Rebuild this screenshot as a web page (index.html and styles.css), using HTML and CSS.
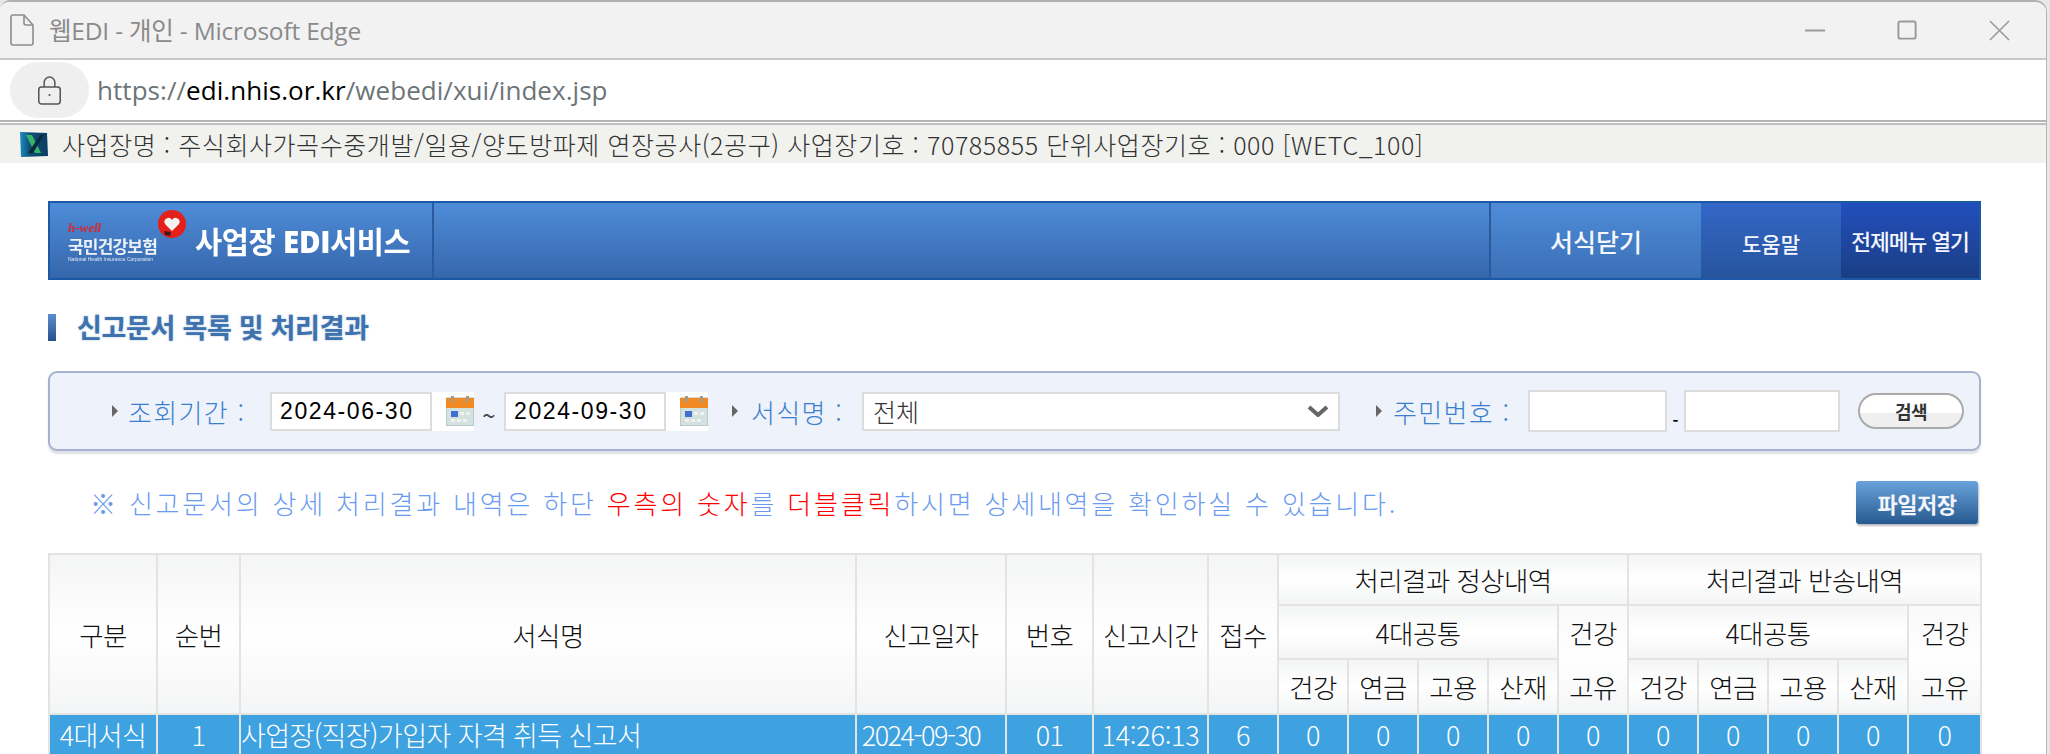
FILE: index.html
```html
<!DOCTYPE html>
<html lang="ko">
<head>
  <meta charset="UTF-8">
  <title>웹EDI - 개인 - Microsoft Edge</title>
  <link rel="stylesheet" href="styles.css">
</head>
<body>
  <div class="window">
    <!-- 타이틀바 -->
    <div class="titlebar">
      <svg class="page-icon" viewBox="0 0 24 32" fill="none" stroke="#8c8c8c" stroke-width="1.6">
        <path d="M3 1h11l9 10v18a2 2 0 0 1-2 2H3a2 2 0 0 1-2-2V3a2 2 0 0 1 2-2z"/>
        <path d="M14 1v8a2 2 0 0 0 2 2h7"/>
      </svg>
      <span class="win-title">웹EDI - 개인 - Microsoft Edge</span>
      <div class="win-buttons">
        <svg viewBox="0 0 22 22" stroke="#999" stroke-width="2" fill="none"><path d="M0 11h21"/></svg>
        <svg viewBox="0 0 22 22" stroke="#999" stroke-width="2" fill="none"><rect x="1.5" y="1.5" width="18" height="18" rx="2"/></svg>
        <svg viewBox="0 0 22 22" stroke="#999" stroke-width="1.6" fill="none"><path d="M1 1l20 20M21 1L1 21"/></svg>
      </div>
    </div>

    <!-- 주소창 -->
    <div class="addressbar">
      <div class="lock">
        <svg viewBox="0 0 28 32" fill="none" stroke="#555" stroke-width="1.7">
          <rect x="2" y="12" width="24" height="19" rx="3"/>
          <path d="M8 12V7a6 6 0 0 1 12 0v5"/>
          <circle cx="14" cy="21" r="1.2" fill="#555" stroke="none"/>
        </svg>
      </div>
      <div class="url">https://<b>edi.nhis.or.kr</b>/webedi/xui/index.jsp</div>
    </div>

    <!-- 사업장 정보 -->
    <div class="infobar">
      <svg class="app-icon" viewBox="0 0 30 28">
        <defs>
          <linearGradient id="appBg" x1="0" y1="0" x2="1" y2="0">
            <stop offset="0" stop-color="#1b8fc4"/>
            <stop offset="0.35" stop-color="#0f4e73"/>
            <stop offset="1" stop-color="#0c3d63"/>
          </linearGradient>
        </defs>
        <path d="M1 2l27 1 1 23-27 1z" fill="url(#appBg)"/>
        <path d="M7 5h6l9 18h-6z" fill="#35b56b"/>
        <path d="M21 5h4L14 23H9z" fill="#0a2a44"/>
      </svg>
      <span>사업장명 : 주식회사가곡수중개발/일용/양도방파제 연장공사(2공구) 사업장기호 : 70785855 단위사업장기호 : 000 [WETC_100]</span>
    </div>

    <div class="content">
      <!-- 상단 배너 -->
      <div class="banner">
        <div class="banner-logo">
          <div class="logo-mark">
            <span class="logo-hwell">h-well</span>
            <span class="logo-name">국민건강보험</span>
            <span class="logo-sub">National Health Insurance Corporation</span>
            <svg class="logo-heart" viewBox="0 0 30 30">
              <circle cx="15" cy="14" r="14" fill="#e5201b"/>
              <path d="M15 21l-7-7a4 4 0 0 1 7-4 4 4 0 0 1 7 4z" fill="#f7f2f2"/>
              <path d="M7 21l7 1-1 4-5-1z" fill="#3a1a1a"/>
            </svg>
          </div>
          <span class="logo-title">사업장 <b>EDI</b>서비스</span>
        </div>
        <div class="banner-space"></div>
        <div class="banner-close">서식닫기</div>
        <div class="banner-help">도움말</div>
        <div class="banner-menu">전제메뉴 열기</div>
      </div>

      <h2 class="section-title">신고문서 목록 및 처리결과</h2>

      <!-- 조회 조건 -->
      <div class="search">
        <span class="s-arrow"></span>
        <label class="s-label s-period">조회기간 :</label>
        <input class="s-date" type="text" value="2024-06-30">
        <span class="s-cal">
          <svg viewBox="0 0 28 30">
            <rect x="0" y="2" width="28" height="28" rx="1" fill="#d3e2de" stroke="#9fb3b3"/>
            <rect x="0" y="2" width="28" height="10" fill="#f08a24"/>
            <rect x="5" y="0" width="3" height="6" fill="#a99a7c"/>
            <rect x="20" y="0" width="3" height="6" fill="#a99a7c"/>
            <rect x="5" y="15" width="7" height="6" fill="#3f6fd0"/>
            <path d="M14 16h4v3h-4zM20 16h4v3h-4zM5 23h4v3H5zM11 23h4v3h-4zM17 23h4v3h-4z" fill="#eef3f1"/>
          </svg>
        </span>
        <span class="s-tilde">~</span>
        <input class="s-date" type="text" value="2024-09-30">
        <span class="s-cal">
          <svg viewBox="0 0 28 30">
            <rect x="0" y="2" width="28" height="28" rx="1" fill="#d3e2de" stroke="#9fb3b3"/>
            <rect x="0" y="2" width="28" height="10" fill="#f08a24"/>
            <rect x="5" y="0" width="3" height="6" fill="#a99a7c"/>
            <rect x="20" y="0" width="3" height="6" fill="#a99a7c"/>
            <rect x="5" y="15" width="7" height="6" fill="#3f6fd0"/>
            <path d="M14 16h4v3h-4zM20 16h4v3h-4zM5 23h4v3H5zM11 23h4v3h-4zM17 23h4v3h-4z" fill="#eef3f1"/>
          </svg>
        </span>
        <span class="s-arrow s-arrow-form"></span>
        <label class="s-label s-form">서식명 :</label>
        <div class="s-select">
          <span>전체</span>
          <svg viewBox="0 0 22 12" fill="none" stroke="#666" stroke-width="4"><path d="M2 2l9 8 9-8"/></svg>
        </div>
        <span class="s-arrow s-arrow-id"></span>
        <label class="s-label s-id">주민번호 :</label>
        <input class="s-id1" type="text">
        <span class="s-dash">-</span>
        <input class="s-id2" type="text">
        <button class="s-btn" type="button">검색</button>
      </div>

      <div class="notice-row">
        <p class="notice">※ 신고문서의 상세 처리결과 내역은 하단 <em>우측의 숫자</em>를 <em>더블클릭</em>하시면 상세내역을 확인하실 수 있습니다.</p>
        <button class="save-btn" type="button">파일저장</button>
      </div>

      <table class="result">
        <colgroup>
          <col class="c-type"><col class="c-seq"><col class="c-name"><col class="c-date"><col class="c-no"><col class="c-time"><col class="c-n">
          <col class="c-n"><col class="c-n"><col class="c-n"><col class="c-n"><col class="c-n">
          <col class="c-n"><col class="c-n"><col class="c-n"><col class="c-n"><col class="c-last">
        </colgroup>
        <thead>
          <tr class="r1">
            <th rowspan="3">구분</th>
            <th rowspan="3">순번</th>
            <th rowspan="3">서식명</th>
            <th rowspan="3">신고일자</th>
            <th rowspan="3">번호</th>
            <th rowspan="3">신고시간</th>
            <th rowspan="3">접수</th>
            <th colspan="5">처리결과 정상내역</th>
            <th colspan="5">처리결과 반송내역</th>
          </tr>
          <tr class="r2">
            <th colspan="4">4대공통</th>
            <th class="join-top">건강</th>
            <th colspan="4">4대공통</th>
            <th class="join-top">건강</th>
          </tr>
          <tr class="r3">
            <th>건강</th><th>연금</th><th>고용</th><th>산재</th>
            <th class="join-bottom">고유</th>
            <th>건강</th><th>연금</th><th>고용</th><th>산재</th>
            <th class="join-bottom">고유</th>
          </tr>
        </thead>
        <tbody>
          <tr class="selected">
            <td>4대서식</td>
            <td>1</td>
            <td class="left">사업장(직장)가입자 자격 취득 신고서</td>
            <td class="narrow">2024-09-30</td>
            <td>01</td>
            <td class="time">14:26:13</td>
            <td>6</td>
            <td>0</td><td>0</td><td>0</td><td>0</td><td>0</td>
            <td>0</td><td>0</td><td>0</td><td>0</td><td>0</td>
          </tr>
        </tbody>
      </table>
    </div>
  </div>
</body>
</html>
```

FILE: styles.css
```css
html, body {
  margin: 0;
  height: 754px;
  overflow: hidden;
  background: #e8e8e8;
}
body {
  font-family: "Noto Sans CJK KR", "Liberation Sans", sans-serif;
  color: #000;
}
.window {
  width: 2047px;
  height: 754px;
  background: #fff;
  border-top: 2px solid #b0b0b0;
  border-right: 1px solid #b5b5b5;
  border-top-right-radius: 12px;
  border-top-left-radius: 10px;
  box-sizing: border-box;
  overflow: hidden;
}

/* title bar */
.titlebar {
  display: flex;
  align-items: center;
  height: 56px;
  padding-left: 10px;
  background: #f2f2f2;
  border-bottom: 2px solid #c8c8c8;
}
.page-icon {
  width: 24px;
  height: 32px;
  margin-right: 15px;
}
.win-title {
  font-family: "Open Sans", "Noto Sans CJK KR", sans-serif;
  font-size: 24.5px;
  color: #8a8a8a;
  letter-spacing: -0.2px;
  margin-top: -2px;
}
.win-buttons {
  display: flex;
  margin-left: auto;
  margin-right: 36px;
  gap: 71px;
}
.win-buttons svg {
  width: 21px;
  height: 21px;
}

/* address bar */
.addressbar {
  display: flex;
  align-items: center;
  height: 60px;
  padding-left: 10px;
  border-bottom: 2px solid #b4b4b4;
}
.lock {
  display: flex;
  align-items: center;
  justify-content: center;
  width: 79px;
  height: 56px;
  border-radius: 28px;
  background: #efefef;
}
.lock svg {
  width: 25px;
  height: 29px;
}
.url {
  margin-left: 8px;
  font-family: "Open Sans", sans-serif;
  font-size: 26px;
  letter-spacing: 0.05px;
  color: #6c7478;
}
.url b {
  font-weight: 400;
  color: #000;
}

/* info bar */
.infobar {
  display: flex;
  align-items: center;
  height: 38px;
  margin-top: 1px;
  padding-left: 19px;
  background: #f1f2ee;
  border-top: 2px solid #bdbdbd;
  font-size: 25px;
  font-weight: 300;
  letter-spacing: 0.57px;
  color: #333;
  white-space: nowrap;
}
.app-icon {
  width: 30px;
  height: 28px;
  margin-right: 13px;
  flex: none;
  filter: blur(0.6px);
}

.content {
  padding: 38px 0 0 48px;
  width: 1933px;
}

/* banner */
.banner {
  display: flex;
  height: 79px;
  border: 2px solid #1b58a5;
  box-sizing: border-box;
  background: linear-gradient(#4f8cd8, #3567ac);
  color: #f4f7fb;
}
.banner-logo {
  display: flex;
  align-items: center;
  width: 384px;
  flex: none;
  box-sizing: border-box;
  padding-left: 18px;
  border-right: 2px solid #2a5a9c;
  filter: blur(0.5px);
}
.logo-mark {
  position: relative;
  display: flex;
  flex-direction: column;
  width: 90px;
  margin-top: 4px;
}
.logo-hwell {
  margin-bottom: 3px;
  font-family: "Liberation Serif", serif;
  font-size: 13px;
  font-style: italic;
  font-weight: 700;
  line-height: 11px;
  color: #d8262c;
}
.logo-name {
  font-size: 17px;
  font-weight: 700;
  line-height: 20px;
  letter-spacing: -0.8px;
  color: #eef2f8;
  white-space: nowrap;
}
.logo-sub {
  font-family: "Liberation Sans", sans-serif;
  font-size: 5px;
  line-height: 7px;
  color: #dfe6f0;
  white-space: nowrap;
}
.logo-heart {
  position: absolute;
  left: 88px;
  top: -12px;
  width: 32px;
  height: 30px;
}
.logo-title {
  margin-left: 37px;
  font-size: 29.5px;
  font-weight: 700;
  letter-spacing: -0.4px;
  color: #fff;
  white-space: nowrap;
}
.logo-title b {
  font-family: "Open Sans", sans-serif;
  font-weight: 800;
}
.banner-space {
  flex: 1;
  border-right: 2px solid #2a5a9c;
}
.banner-close, .banner-help, .banner-menu {
  display: flex;
  align-items: center;
  justify-content: center;
  flex: none;
  white-space: nowrap;
  font-weight: 500;
  box-sizing: border-box;
}
.banner-close {
  width: 210px;
  font-size: 25px;
  background: linear-gradient(#4f8cd8, #3a6fb6);
}
.banner-help {
  width: 140px;
  padding-top: 4px;
  font-size: 21px;
  background: linear-gradient(#3467c8, #26559c);
}
.banner-menu {
  width: 138px;
  font-size: 21.5px;
  letter-spacing: -1px;
  background: linear-gradient(#234fbd, #1a3e84);
}

.section-title {
  position: relative;
  margin: 30px 0 0;
  padding-left: 29px;
  height: 40px;
  font-size: 27px;
  font-weight: 700;
  line-height: 34px;
  letter-spacing: -0.3px;
  color: #3d72ae;
  text-shadow: 0 0 2px rgba(61, 114, 174, 0.5);
}
.section-title::before {
  content: "";
  position: absolute;
  left: 0;
  top: 4px;
  width: 8px;
  height: 27px;
  background: linear-gradient(#5b8ed0, #27508f);
}

/* search box */
.search {
  display: flex;
  align-items: center;
  height: 80px;
  margin-top: 21px;
  box-sizing: border-box;
  border: 2px solid #a6b2cf;
  border-radius: 9px;
  background: #eef2fa;
  box-shadow: 0 3px 2px #dfe1e6;
}
.search input, .s-select {
  height: 39px;
  box-sizing: border-box;
  border: 2px solid #dcdcdc;
  background: #fff;
  margin: 0;
  flex: none;
}
.s-arrow {
  width: 0;
  height: 0;
  margin-left: 62px;
  border-left: 6px solid #666;
  border-top: 6px solid transparent;
  border-bottom: 6px solid transparent;
}
.s-arrow-form { margin-left: 24px; }
.s-arrow-id { margin-left: 36px; }
.s-label {
  margin-left: 10px;
  font-size: 26px;
  font-weight: 300;
  letter-spacing: 1.3px;
  color: #3b7fcf;
  white-space: nowrap;
  width: 142px;
  flex: none;
}
.s-form { width: 111px; margin-left: 13px; }
.s-id { width: 135px; margin-left: 11px; }
.s-date {
  width: 162px;
  padding: 0 0 0 8px;
  font-family: "Liberation Sans", sans-serif;
  font-size: 23px;
  letter-spacing: 1.6px;
  color: #000;
}
.s-cal {
  display: flex;
  align-items: center;
  flex: none;
  width: 42px;
  height: 39px;
  box-sizing: border-box;
  padding-left: 14px;
  background: #fff;
}
.s-cal svg {
  width: 28px;
  height: 30px;
}
.s-tilde {
  flex: none;
  width: 30px;
  padding-top: 6px;
  text-align: center;
  font-size: 24px;
  color: #444;
}
.s-select {
  display: flex;
  align-items: center;
  justify-content: space-between;
  width: 478px;
  padding: 0 9px;
  font-size: 25px;
  font-weight: 300;
  color: #333;
}
.s-select svg {
  width: 22px;
  height: 12px;
}
.search .s-id1 { width: 139px; height: 42px; }
.s-dash {
  flex: none;
  width: 17px;
  padding-top: 18px;
  text-align: center;
  font-size: 16px;
  font-weight: 700;
}
.search .s-id2 { width: 156px; height: 42px; }
.s-btn {
  flex: none;
  width: 106px;
  height: 36px;
  margin-left: 18px;
  padding: 0;
  border: 2px solid #aaa;
  border-radius: 18px;
  background: linear-gradient(#fff 55%, #efefef 56%);
  font-family: inherit;
  font-size: 18px;
  font-weight: 700;
  letter-spacing: -0.5px;
  color: #333;
}

/* notice */
.notice-row {
  display: flex;
  align-items: center;
  justify-content: space-between;
  height: 43px;
  margin-top: 30px;
  padding-left: 42px;
  padding-right: 3px;
}
.notice {
  margin: 0;
  font-size: 26px;
  font-weight: 300;
  letter-spacing: 2.8px;
  color: #6b9bf0;
  white-space: nowrap;
}
.notice em {
  font-style: normal;
  color: #f00;
}
.save-btn {
  width: 122px;
  height: 43px;
  padding: 0;
  border: 0;
  border-radius: 3px;
  background: linear-gradient(#6aa3dc, #26598f);
  box-shadow: 1px 2px 2px #b9bcc2;
  font-family: inherit;
  font-size: 22px;
  font-weight: 700;
  letter-spacing: -0.5px;
  color: #f2f5f9;
}

/* table */
.result {
  width: 1932px;
  margin-top: 29px;
  table-layout: fixed;
  border-collapse: collapse;
  font-weight: 300;
}
.c-type { width: 108px; }
.c-seq { width: 83px; }
.c-name { width: 616px; }
.c-date { width: 150px; }
.c-no { width: 87px; }
.c-time { width: 115px; }
.c-n { width: 70px; }
.c-last { width: 73px; }
.result th, .result td {
  padding: 0;
  border: 2px solid #e3e3e3;
  text-align: center;
  font-size: 26.5px;
  letter-spacing: -0.6px;
  white-space: nowrap;
  overflow: hidden;
}
.result th {
  font-weight: 300;
  color: #111;
  background: linear-gradient(#f4f5f6, #fff 50%, #f4f5f6);
}
.r1 { height: 51px; }
.r2 { height: 54px; }
.r3 { height: 55px; }
.result .join-top {
  border-bottom: 0;
  background: linear-gradient(#f9f9fa, #fff);
}
.result .join-bottom {
  border-top: 0;
  background: linear-gradient(#fff, #f4f5f6);
}
.selected { height: 39px; }
.selected td {
  background: #3ea2e0;
  color: #fff;
  font-size: 27px;
}
.result .left {
  text-align: left;
}
.result .narrow {
  letter-spacing: -1.5px;
  padding-right: 20px;
}
.result .time {
  letter-spacing: -0.3px;
}
```
